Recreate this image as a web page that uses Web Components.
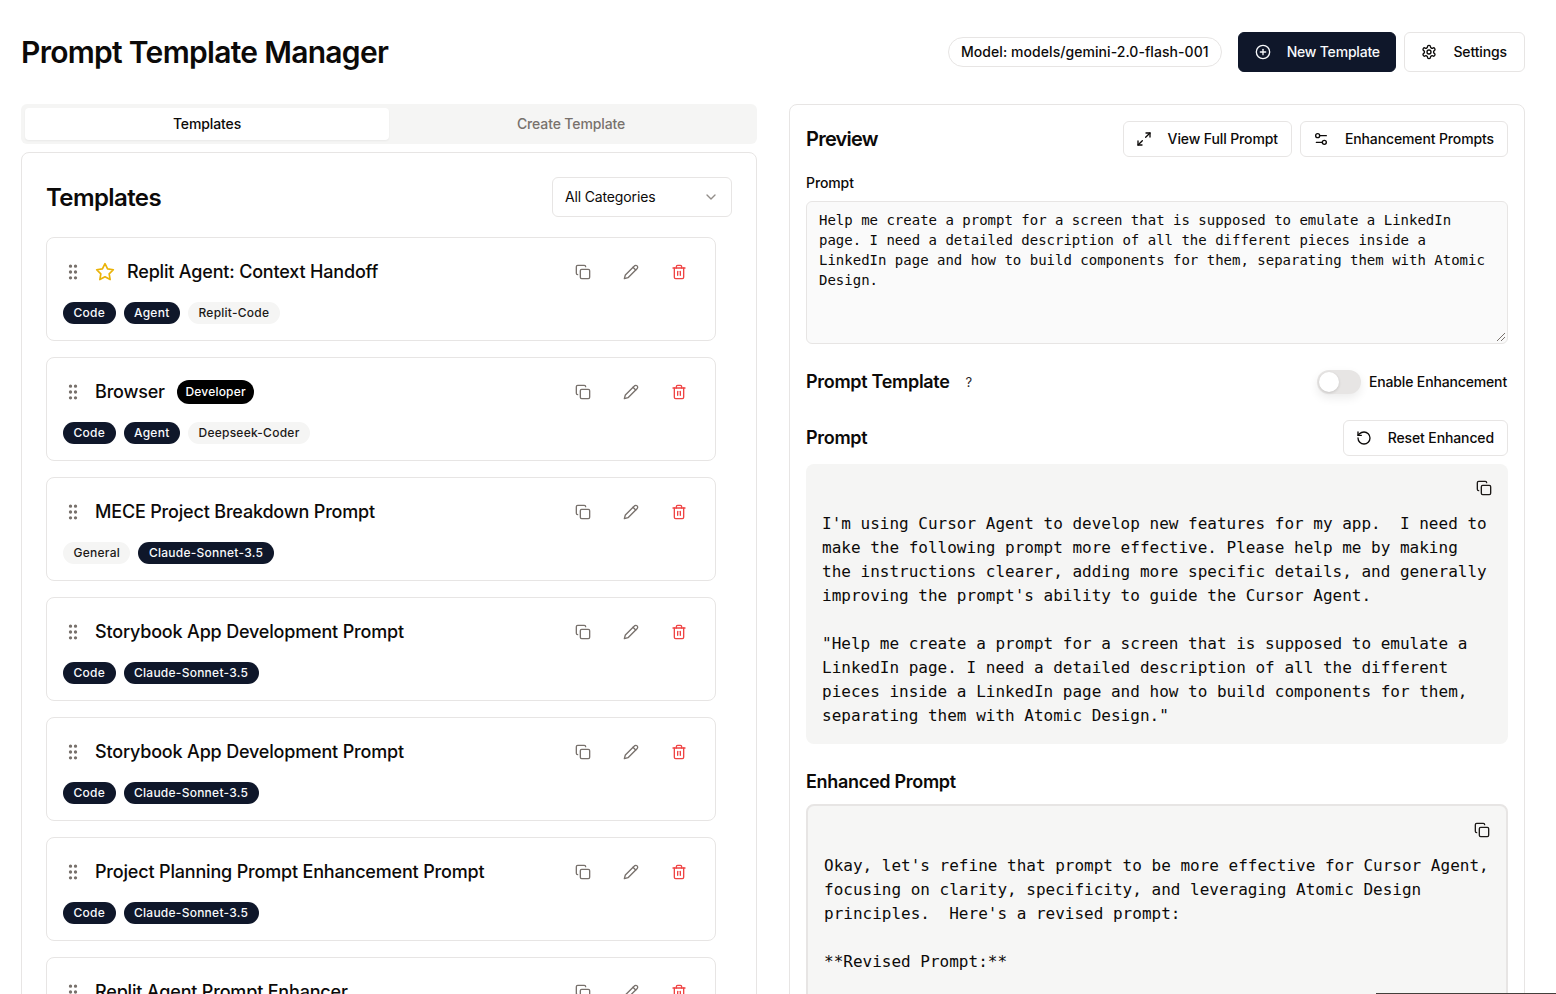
<!DOCTYPE html>
<html>
<head>
<meta charset="utf-8">
<title>Prompt Template Manager</title>
<style>
  html, body { margin: 0; height: 994px; overflow: hidden; background: #fff; }
  body { font-family: Inter, "Liberation Sans", sans-serif; color: #0c0a09; }
</style>
</head>
<body>
<prompt-manager></prompt-manager>

<script>
const ICONS = {
  copy: '<rect x="8" y="8" width="14" height="14" rx="2"/><path d="M4 16c-1.1 0-2-.9-2-2V4c0-1.1.9-2 2-2h10c1.1 0 2 .9 2 2"/>',
  pencil: '<path d="M17 3a2.85 2.83 0 1 1 4 4L7.5 20.5 2 22l1.5-5.5Z"/><path d="m15 5 4 4"/>',
  trash: '<path d="M3 6h18"/><path d="M19 6v14c0 1-1 2-2 2H7c-1 0-2-1-2-2V6"/><path d="M8 6V4c0-1 1-2 2-2h4c1 0 2 1 2 2v2"/><path d="M10 11v6"/><path d="M14 11v6"/>',
  star: '<polygon points="12 2 15.09 8.26 22 9.27 17 14.14 18.18 21.02 12 17.77 5.82 21.02 7 14.14 2 9.27 8.91 8.26"/>',
  plus: '<circle cx="12" cy="12" r="10"/><path d="M8 12h8"/><path d="M12 8v8"/>',
  settings: '<path d="M12.22 2h-.44a2 2 0 0 0-2 2v.18a2 2 0 0 1-1 1.73l-.43.25a2 2 0 0 1-2 0l-.15-.08a2 2 0 0 0-2.73.73l-.22.38a2 2 0 0 0 .73 2.73l.15.1a2 2 0 0 1 1 1.72v.51a2 2 0 0 1-1 1.74l-.15.09a2 2 0 0 0-.73 2.73l.22.38a2 2 0 0 0 2.73.73l.15-.08a2 2 0 0 1 2 0l.43.25a2 2 0 0 1 1 1.73V20a2 2 0 0 0 2 2h.44a2 2 0 0 0 2-2v-.18a2 2 0 0 1 1-1.73l.43-.25a2 2 0 0 1 2 0l.15.08a2 2 0 0 0 2.73-.73l.22-.39a2 2 0 0 0-.73-2.73l-.15-.08a2 2 0 0 1-1-1.74v-.5a2 2 0 0 1 1-1.74l.15-.09a2 2 0 0 0 .73-2.73l-.22-.38a2 2 0 0 0-2.73-.73l-.15.08a2 2 0 0 1-2 0l-.43-.25a2 2 0 0 1-1-1.73V4a2 2 0 0 0-2-2z"/><circle cx="12" cy="12" r="3"/>',
  expand: '<path d="M15 3h6v6"/><path d="m21 3-6.5 6.5"/><path d="M9 21H3v-6"/><path d="m3 21 6.5-6.5"/>',
  sliders: '<path d="M20 7h-9"/><path d="M14 17H5"/><circle cx="17" cy="17" r="3"/><circle cx="7" cy="7" r="3"/>',
  reset: '<path d="M3 12a9 9 0 1 0 9-9 9.75 9.75 0 0 0-6.74 2.74L3 8"/><path d="M3 3v5h5"/>',
  chevron: '<path d="m6 9 6 6 6-6"/>',
  grip: '<circle cx="9" cy="5" r="1"/><circle cx="9" cy="12" r="1"/><circle cx="9" cy="19" r="1"/><circle cx="15" cy="5" r="1"/><circle cx="15" cy="12" r="1"/><circle cx="15" cy="19" r="1"/>',
};

class UiIcon extends HTMLElement {
  connectedCallback() {
    const size = this.getAttribute('size') || 16;
    this.attachShadow({ mode: 'open' }).innerHTML = `
      <style>
        :host { display: inline-flex; flex: none; width: ${size}px; height: ${size}px; }
        svg { display: block; }
      </style>
      <svg width="${size}" height="${size}" viewBox="0 0 24 24" fill="none" stroke="currentColor"
        stroke-width="2" stroke-linecap="round" stroke-linejoin="round">${ICONS[this.getAttribute('name')]}</svg>`;
  }
}

class UiButton extends HTMLElement {
  connectedCallback() {
    this.attachShadow({ mode: 'open' }).innerHTML = `
      <style>
        :host {
          display: inline-flex; align-items: center; gap: 16px; box-sizing: border-box; flex: none;
          height: 36px; padding: 0 13px 0 12px; border: 1px solid #e7e5e4; border-radius: 6px;
          background: #fff; color: #0c0a09; font-size: 14px; font-weight: 500; white-space: nowrap;
          letter-spacing: -0.12px;
        }
        :host([large]) { height: 40px; padding: 0 17px 0 16px; }
        :host([primary]) { padding: 0 15.5px; background: #0f172a; border-color: #0f172a; color: #f8fafc; letter-spacing: -0.2px; }
        span { padding-bottom: 1px; }
      </style>
      <ui-icon name="${this.getAttribute('icon')}"></ui-icon><span><slot></slot></span>`;
  }
}

class UiTag extends HTMLElement {
  connectedCallback() {
    this.attachShadow({ mode: 'open' }).innerHTML = `
      <style>
        :host {
          display: inline-flex; align-items: center; box-sizing: border-box; height: 22px; padding: 0 9.5px;
          border: 1px solid transparent; border-radius: 999px; background: #0f172a; color: #f8fafc;
          font-size: 12px; font-weight: 500; line-height: 16px; white-space: nowrap; letter-spacing: .25px;
        }
        :host([soft]) { background: #f5f5f4; color: #1c1917; }
        :host([badge]) { height: 24px; padding: 0 7.5px; background: #000; color: #fff; letter-spacing: .2px; }
      </style>
      <slot></slot>`;
  }
}

class TemplateCard extends HTMLElement {
  connectedCallback() {
    const star = this.hasAttribute('starred') ? '<ui-icon class="star" name="star" size="20"></ui-icon>' : '';
    const badge = this.getAttribute('badge');
    this.attachShadow({ mode: 'open' }).innerHTML = `
      <style>
        :host {
          display: block; box-sizing: border-box; height: 104px; flex: none; padding: 16px;
          border: 1px solid #e7e5e4; border-radius: 8px; background: #fff;
        }
        .top { display: flex; align-items: center; gap: 12px; height: 36px; margin-bottom: 12px; }
        .grip { color: #78716c; }
        .star { color: #eab308; }
        .title { font-size: 18px; font-weight: 500; line-height: 28px; white-space: nowrap; letter-spacing: -0.18px; }
        .actions { display: flex; gap: 8px; margin-left: auto; }
        .act { display: flex; align-items: center; justify-content: center; width: 40px; height: 36px; color: #78716c; }
        .act.del { color: #ef4444; }
        .tags { display: flex; gap: 8px; }
      </style>
      <div class="top">
        <ui-icon class="grip" name="grip" size="20"></ui-icon>
        ${star}
        <span class="title">${this.getAttribute('title')}</span>
        ${badge ? `<ui-tag badge>${badge}</ui-tag>` : ''}
        <div class="actions">
          <span class="act"><ui-icon name="copy"></ui-icon></span>
          <span class="act"><ui-icon name="pencil"></ui-icon></span>
          <span class="act del"><ui-icon name="trash"></ui-icon></span>
        </div>
      </div>
      <div class="tags"><slot></slot></div>`;
    this.removeAttribute('title');
  }
}

class TemplateTabs extends HTMLElement {
  connectedCallback() {
    this.attachShadow({ mode: 'open' }).innerHTML = `
      <style>
        :host {
          display: grid; grid-template-columns: 1fr 1fr; box-sizing: border-box; height: 40px; padding: 4px;
          border-radius: 6px; background: #f5f5f4; font-size: 14px; font-weight: 500; color: #78716c;
          letter-spacing: -0.12px;
        }
        span { display: flex; align-items: center; justify-content: center; border-radius: 4px; padding-bottom: 1px; }
        .on { background: #fff; color: #0c0a09; box-shadow: 0 1px 2px rgba(0,0,0,.05); }
      </style>
      <span class="on">Templates</span><span>Create Template</span>`;
  }
}

class TemplateList extends HTMLElement {
  connectedCallback() {
    this.attachShadow({ mode: 'open' }).innerHTML = `
      <style>
        :host {
          display: block; box-sizing: border-box; height: 1000px; padding: 24px;
          border: 1px solid #e7e5e4; border-radius: 8px; background: #fff; overflow: hidden;
        }
        .head { display: flex; align-items: center; justify-content: space-between; margin-bottom: 20px; }
        h2 { margin: 2px 0 0; font-size: 24px; font-weight: 600; line-height: 32px; letter-spacing: -0.6px; }
        .select {
          display: flex; align-items: center; justify-content: space-between; box-sizing: border-box;
          width: 180px; height: 40px; padding: 0 12px 1px; border: 1px solid #e7e5e4; border-radius: 6px;
          font-size: 14px; letter-spacing: -0.15px;
        }
        .select ui-icon { color: #78716c; opacity: .8; }
        .list { display: flex; flex-direction: column; gap: 16px; padding-right: 16px; }
      </style>
      <div class="head">
        <h2>Templates</h2>
        <div class="select">All Categories<ui-icon name="chevron"></ui-icon></div>
      </div>
      <div class="list"><slot></slot></div>`;
  }
}

class CodePanel extends HTMLElement {
  connectedCallback() {
    this.attachShadow({ mode: 'open' }).innerHTML = `
      <style>
        :host {
          display: block; position: relative; box-sizing: border-box; padding: 48px 16px 16px;
          border-radius: 8px; background: #f5f5f4; color: #0c0a09;
          font: 16px/24px "DejaVu Sans Mono", "Liberation Mono", monospace;
        }
        :host([bordered]) { border: 2px solid #e7e5e4; height: 400px; overflow: hidden; background: #f6f6f5; }
        .text { white-space: pre-wrap; }
        ui-icon { position: absolute; top: 16px; right: 16px; color: #1c1917; }
      </style>
      <ui-icon name="copy"></ui-icon><div class="text"><slot></slot></div>`;
  }
}

class PreviewPanel extends HTMLElement {
  connectedCallback() {
    this.attachShadow({ mode: 'open' }).innerHTML = `
      <style>
        :host {
          display: block; box-sizing: border-box; height: 1000px; padding: 16px;
          border: 1px solid #e7e5e4; border-radius: 8px; background: #fff; overflow: hidden;
        }
        .row { display: flex; align-items: center; justify-content: space-between; }
        .btns { display: flex; gap: 8px; }
        h2 { margin: 0; font-size: 20px; font-weight: 600; line-height: 28px; letter-spacing: -0.75px; }
        h3 { margin: 0; font-size: 18px; font-weight: 600; line-height: 28px; letter-spacing: -0.3px; }
        label { display: block; margin: 17px 0 9px; font-size: 14px; font-weight: 500; line-height: 18px; letter-spacing: -0.1px; }
        .area {
          position: relative; box-sizing: border-box; height: 143px; padding: 8px 12px;
          border: 1px solid #e7e5e4; border-radius: 6px; background: #fafafa;
          font: 14px/20px "DejaVu Sans Mono", "Liberation Mono", monospace; white-space: pre-wrap;
        }
        .grab { position: absolute; right: 1px; bottom: 1px; display: block; }
        .tpl { height: 24px; margin: 26px 0 26px; }
        .tpl .left { display: flex; align-items: center; gap: 16px; }
        .help { font-size: 13px; font-weight: 400; color: #292524; width: 8px; }
        .switch-wrap { display: flex; align-items: center; gap: 8px; font-size: 14px; font-weight: 500; letter-spacing: -0.15px; }
        .switch {
          position: relative; box-sizing: border-box; width: 44px; height: 24px; border-radius: 999px;
          background: #e7e5e4; box-shadow: 0 4px 10px rgba(0,0,0,.08);
        }
        .switch i {
          position: absolute; left: 2px; top: 2px; width: 20px; height: 20px; border-radius: 50%;
          background: #fff; box-shadow: 0 1px 3px rgba(0,0,0,.15);
        }
        .switch-wrap b { font-weight: 500; padding: 0 1px 1px 0; }
        .prompt-head { margin-bottom: 8px; }
        .enh { margin: 24px 0 8px; line-height: 28px; }
      </style>
      <div class="row">
        <h2>Preview</h2>
        <div class="btns">
          <ui-button icon="expand">View Full Prompt</ui-button>
          <ui-button icon="sliders">Enhancement Prompts</ui-button>
        </div>
      </div>
      <label>Prompt</label>
      <div class="area">Help me create a prompt for a screen that is supposed to emulate a LinkedIn page. I need a detailed description of all the different pieces inside a LinkedIn page and how to build components for them, separating them with Atomic Design.<svg class="grab" width="10" height="10" viewBox="0 0 10 10" fill="none" stroke="#78716c" stroke-width="1"><path d="M1 9 9 1M5 9 9 5"/></svg></div>
      <div class="row tpl">
        <div class="left"><h3>Prompt Template</h3><span class="help">?</span></div>
        <div class="switch-wrap"><span class="switch"><i></i></span><b>Enable Enhancement</b></div>
      </div>
      <div class="row prompt-head">
        <h3>Prompt</h3>
        <ui-button icon="reset">Reset Enhanced</ui-button>
      </div>
      <slot name="prompt"></slot>
      <h3 class="enh">Enhanced Prompt</h3>
      <slot name="enhanced"></slot>`;
  }
}

class PromptManager extends HTMLElement {
  connectedCallback() {
    this.attachShadow({ mode: 'open' }).innerHTML = `
      <style>
        :host { display: block; box-sizing: border-box; width: 1556px; height: 994px; padding: 32px 31px 0 21px; overflow: hidden; }
        header { display: flex; align-items: center; height: 40px; margin-bottom: 32px; }
        h1 { margin: 0 auto 0 0; font-size: 30px; font-weight: 600; line-height: 36px; letter-spacing: -0.7px; }
        .model {
          display: flex; align-items: center; box-sizing: border-box; height: 30px; padding: 0 12.5px 1px;
          border: 1px solid #e7e5e4; border-radius: 999px; font-size: 14px; font-weight: 500; margin-right: 16px;
          letter-spacing: .06px;
        }
        .settings { margin-left: 8px; }
        .cols { display: grid; grid-template-columns: 736px 736px; gap: 32px; }
        .left { display: flex; flex-direction: column; gap: 8px; }
        .toast { position: fixed; left: 1376px; right: 0; top: 993px; height: 1px; background: #44403c; }
      </style>
      <header>
        <h1>Prompt Template Manager</h1>
        <div class="model">Model: models/gemini-2.0-flash-001</div>
        <ui-button large primary icon="plus">New Template</ui-button>
        <ui-button large class="settings" icon="settings">Settings</ui-button>
      </header>
      <div class="cols">
        <div class="left">
          <template-tabs></template-tabs>
          <template-list>
            <template-card title="Replit Agent: Context Handoff" starred>
              <ui-tag>Code</ui-tag><ui-tag>Agent</ui-tag><ui-tag soft>Replit-Code</ui-tag>
            </template-card>
            <template-card title="Browser" badge="Developer">
              <ui-tag>Code</ui-tag><ui-tag>Agent</ui-tag><ui-tag soft>Deepseek-Coder</ui-tag>
            </template-card>
            <template-card title="MECE Project Breakdown Prompt">
              <ui-tag soft>General</ui-tag><ui-tag>Claude-Sonnet-3.5</ui-tag>
            </template-card>
            <template-card title="Storybook App Development Prompt">
              <ui-tag>Code</ui-tag><ui-tag>Claude-Sonnet-3.5</ui-tag>
            </template-card>
            <template-card title="Storybook App Development Prompt">
              <ui-tag>Code</ui-tag><ui-tag>Claude-Sonnet-3.5</ui-tag>
            </template-card>
            <template-card title="Project Planning Prompt Enhancement Prompt">
              <ui-tag>Code</ui-tag><ui-tag>Claude-Sonnet-3.5</ui-tag>
            </template-card>
            <template-card title="Replit Agent Prompt Enhancer">
              <ui-tag>Code</ui-tag>
            </template-card>
          </template-list>
        </div>
        <preview-panel>
          <code-panel slot="prompt">I'm using Cursor Agent to develop new features for my app.  I need to make the following prompt more effective. Please help me by making the instructions clearer, adding more specific details, and generally improving the prompt's ability to guide the Cursor Agent.

"Help me create a prompt for a screen that is supposed to emulate a LinkedIn page. I need a detailed description of all the different pieces inside a LinkedIn page and how to build components for them, separating them with Atomic Design."</code-panel>
          <code-panel slot="enhanced" bordered>Okay, let's refine that prompt to be more effective for Cursor Agent, focusing on clarity, specificity, and leveraging Atomic Design principles.  Here's a revised prompt:

**Revised Prompt:**</code-panel>
        </preview-panel>
      </div>
      <div class="toast"></div>`;
  }
}

customElements.define('ui-icon', UiIcon);
customElements.define('ui-button', UiButton);
customElements.define('ui-tag', UiTag);
customElements.define('template-card', TemplateCard);
customElements.define('template-tabs', TemplateTabs);
customElements.define('template-list', TemplateList);
customElements.define('code-panel', CodePanel);
customElements.define('preview-panel', PreviewPanel);
customElements.define('prompt-manager', PromptManager);
</script>
</body>
</html>
